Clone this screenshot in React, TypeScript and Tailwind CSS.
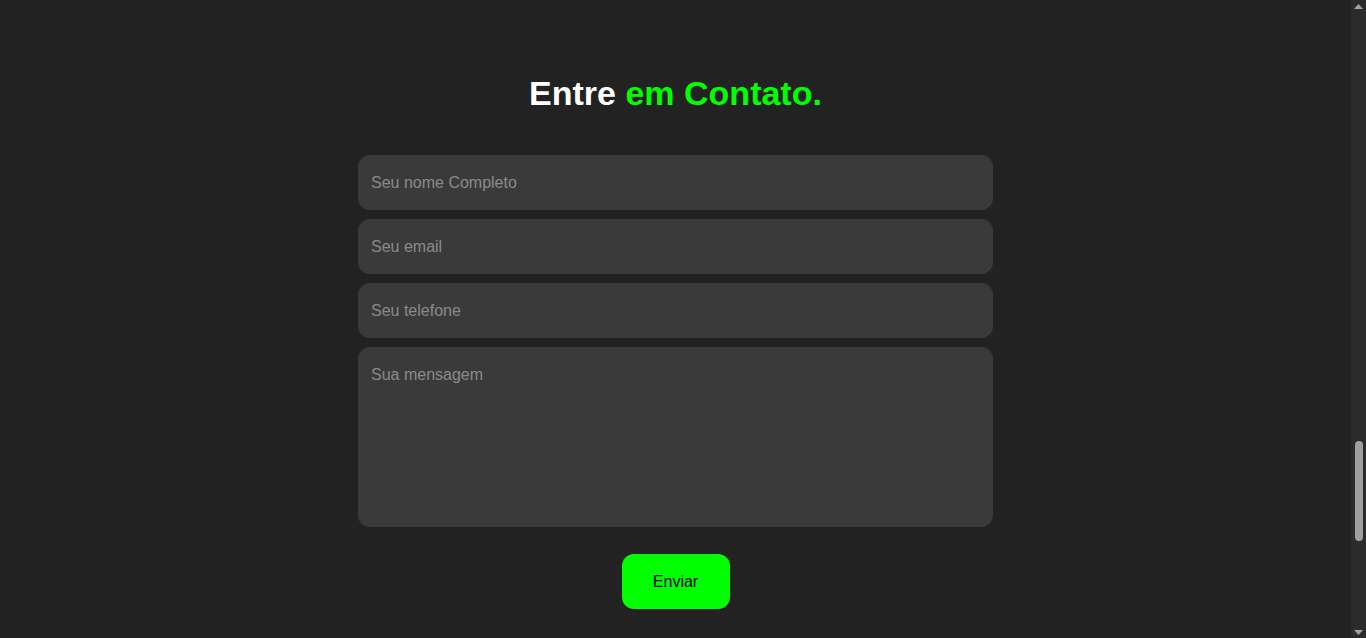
export default function App() {
  const font = { fontFamily: '"Liberation Sans", Arial, sans-serif' };
  const inputCls =
    "w-full h-[55px] rounded-xl bg-[#3a3a3a] px-[13px] text-base text-white placeholder:text-[#8a8a8a] outline-none border-0";
  return (
    <div className="h-screen flex bg-[#222222] overflow-hidden" style={font}>
      <main className="flex-1 min-w-0">
        <section className="h-[638px] flex flex-col items-center pt-[73px]">
          <h2 className="text-[34px] leading-[40px] font-bold text-white">
            Entre <span className="text-[#00ff00]">em Contato.</span>
          </h2>
          <form
            className="mt-[42px] w-[635px] flex flex-col gap-[9px]"
            onSubmit={(e) => e.preventDefault()}
          >
            <input className={inputCls} style={font} placeholder="Seu nome Completo" />
            <input className={inputCls} style={font} placeholder="Seu email" />
            <input className={inputCls} style={font} placeholder="Seu telefone" />
            <textarea
              className="w-full h-[180px] resize-none rounded-xl bg-[#3a3a3a] px-[13px] pt-[16px] text-base text-white placeholder:text-[#8a8a8a] outline-none border-0"
              style={font}
              placeholder="Sua mensagem"
            />
            <div className="flex justify-center mt-[18px]">
              <button
                type="submit"
                className="w-[108px] h-[55px] rounded-xl bg-[#00ff00] text-black text-base"
                style={font}
              >
                Enviar
              </button>
            </div>
          </form>
        </section>
      </main>
      <div className="w-[15px] flex flex-col bg-[#2b2b2b]">
        <div className="h-[17px] flex items-start justify-center pt-[4px]">
          <svg width="9" height="5" viewBox="0 0 9 5">
            <path d="M4.5 0 L9 5 L0 5 Z" fill="#a3a3a3" />
          </svg>
        </div>
        <div className="flex-1">
          <div className="mt-[424px] mx-auto h-[100px] w-[8px] rounded-full bg-[#9f9f9f]" />
        </div>
        <div className="h-[17px] flex items-end justify-center pb-[3px]">
          <svg width="9" height="5" viewBox="0 0 9 5">
            <path d="M0 0 L9 0 L4.5 5 Z" fill="#a3a3a3" />
          </svg>
        </div>
      </div>
    </div>
  );
}
